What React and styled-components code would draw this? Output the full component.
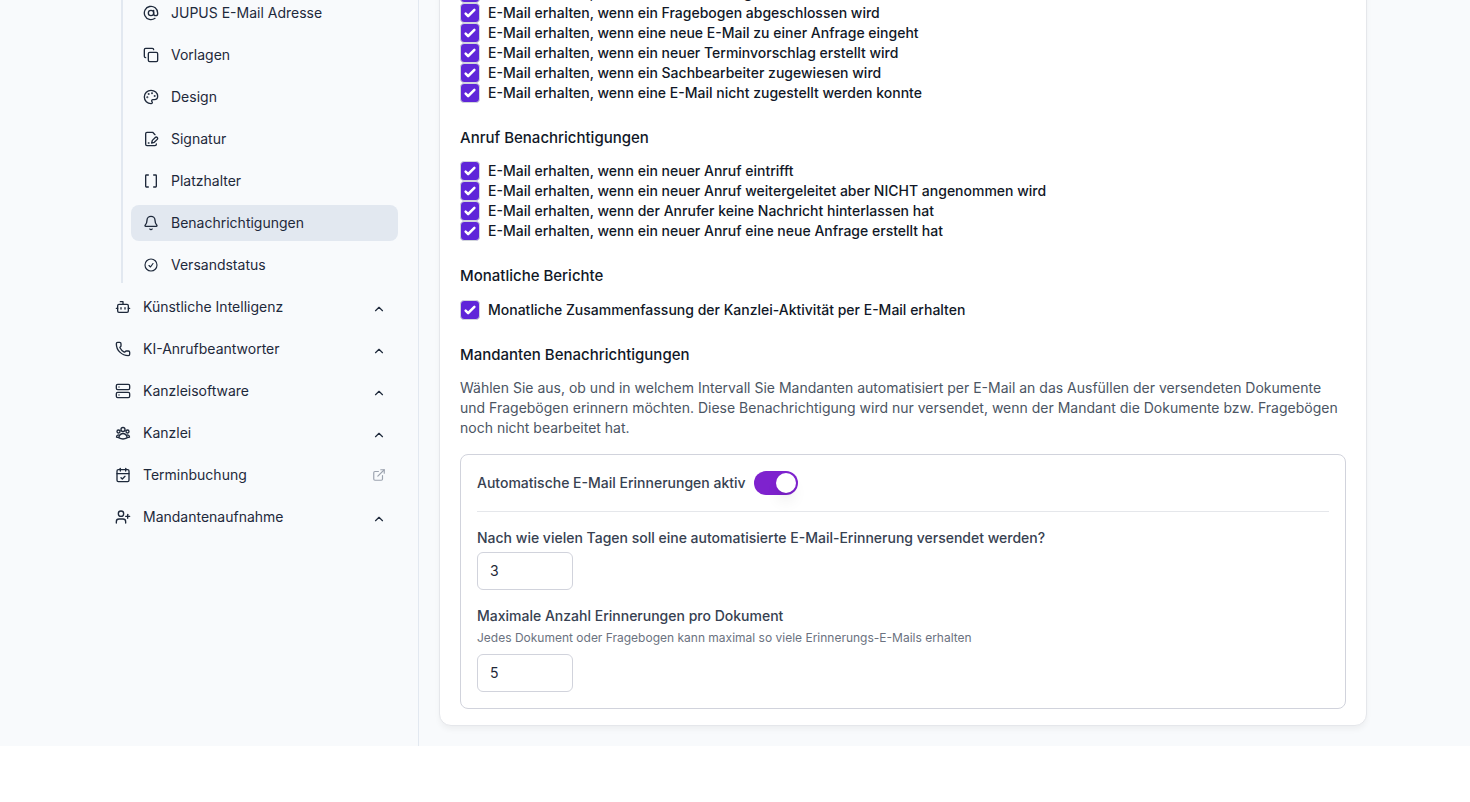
import React, { useState } from 'react';
import styled, { createGlobalStyle } from 'styled-components';
import {
  AtSign,
  Bell,
  Bot,
  Brackets,
  CalendarCheck,
  ChevronUp,
  Copy,
  ExternalLink,
  Palette,
  Phone,
  Server,
  UserPlus,
} from 'lucide-react';
import { HiOutlineCheckCircle, HiOutlineUserGroup } from 'react-icons/hi2';

const GlobalStyle = createGlobalStyle`
  *, *::before, *::after {
    box-sizing: border-box;
  }
  body {
    margin: 0;
    background-color: #ffffff;
    font-family: Inter, 'Liberation Sans', sans-serif;
    font-size: 14px;
    line-height: 20px;
    color: #111827;
  }
`;

const Page = styled.div`
  background-color: #f8fafc;
  overflow: hidden;
`;

const Container = styled.div`
  display: flex;
  max-width: 1280px;
  margin: 0 auto;
  padding: 0 8px;
`;

const Sidebar = styled.nav`
  flex: 0 0 316px;
  padding-right: 20px;
  border-right: 1px solid #e2e8f0;
`;

const NavList = styled.ul`
  display: flex;
  flex-direction: column;
  gap: 6px;
  margin: 0;
  padding: 0;
  list-style: none;
`;

const SubList = styled(NavList)`
  margin: -5px 0 6px 18px;
  padding-left: 8px;
  border-left: 2px solid #e2e8f0;
`;

const NavLink = styled.a`
  display: flex;
  align-items: center;
  gap: 12px;
  height: 36px;
  padding: 0 12px;
  border-radius: 8px;
  color: #1e293b;
  text-decoration: none;
  background-color: ${({ $active }) => ($active ? '#e2e8f0' : 'transparent')};
`;

const NavButton = styled.button`
  display: flex;
  align-items: center;
  gap: 12px;
  width: 100%;
  height: 36px;
  padding: 0 12px;
  border: 0;
  background: none;
  color: #1e293b;
  font: inherit;
  text-align: left;
`;

const NavText = styled.span`
  flex: 1;
`;

const Arrow = styled.span`
  display: flex;
  padding-top: 4px;
`;

const External = styled.span`
  display: flex;
  color: #9ca3af;
`;

const CheckIcon = styled(HiOutlineCheckCircle)`
  stroke-width: 1.75;
`;

const GroupIcon = styled(HiOutlineUserGroup)`
  stroke-width: 2;
`;

const Main = styled.main`
  flex: 1;
  min-width: 0;
  padding: 0 0 20px 20px;
`;

const Card = styled.div`
  margin-top: -20px;
  padding: 2px 20px 16px;
  border: 1px solid #e5e7eb;
  border-radius: 12px;
  background-color: #ffffff;
  box-shadow: 0 4px 6px -1px rgba(0, 0, 0, 0.05);
`;

const Section = styled.section`
  margin-bottom: 24px;
`;

const Title = styled.h3`
  margin: 0 0 ${({ $gap }) => $gap || 12}px;
  font-size: 15px;
  font-weight: 500;
  line-height: 22px;
`;

const CheckRow = styled.label`
  display: flex;
  align-items: center;
  gap: 8px;
  height: 20px;
  font-weight: 500;
`;

const Checkbox = styled.input`
  appearance: none;
  width: 20px;
  height: 20px;
  margin: 0;
  border: 1px solid #d1d5db;
  border-radius: 4px;
  background: #ffffff;

  &:checked {
    background: #5f26d9 url("data:image/svg+xml,%3Csvg viewBox='0 0 16 16' fill='white' xmlns='http://www.w3.org/2000/svg'%3E%3Cpath d='M12.207 4.793a1 1 0 010 1.414l-5 5a1 1 0 01-1.414 0l-2-2a1 1 0 011.414-1.414L6.5 9.086l4.293-4.293a1 1 0 011.414 0z'/%3E%3C/svg%3E") center / 20px 20px no-repeat;
  }
`;

const Intro = styled.p`
  margin: 0 0 16px;
  color: #4b5563;
`;

const Box = styled.div`
  padding: 16px;
  border: 1px solid #d1d3dc;
  border-radius: 8px;
`;

const SwitchRow = styled.label`
  display: flex;
  align-items: center;
  gap: 8px;
  padding-bottom: 16px;
  margin-bottom: 16px;
  border-bottom: 1px solid #e5e7eb;
  color: #374151;
  font-weight: 500;
`;

const Switch = styled.input`
  appearance: none;
  display: flex;
  align-items: center;
  width: 44px;
  height: 24px;
  margin: 0;
  padding: 0 2px;
  border-radius: 12px;
  background-color: #d1d5db;

  &::before {
    content: '';
    width: 20px;
    height: 20px;
    border-radius: 50%;
    background-color: #ffffff;
    box-shadow: 0 10px 15px -3px rgba(0, 0, 0, 0.1), 0 4px 6px -4px rgba(0, 0, 0, 0.1);
  }

  &:checked {
    justify-content: flex-end;
    background-color: #7e22ce;
  }
`;

const Field = styled.div`
  display: flex;
  flex-direction: column;
  align-items: flex-start;

  & + & {
    margin-top: 16px;
  }
`;

const FieldLabel = styled.label`
  margin-bottom: 4px;
  color: #374151;
  font-weight: 500;
`;

const Hint = styled.span`
  margin-bottom: 8px;
  color: #6b7280;
  font-size: 12px;
  line-height: 16px;
`;

const NumberInput = styled.input`
  width: 96px;
  height: 38px;
  padding: 0 12px 2px;
  border: 1px solid #d1d3dc;
  border-radius: 6px;
  background-color: #ffffff;
  color: #1f2937;
  font: inherit;
  appearance: textfield;
`;

const SignatureIcon = ({ size }) => (
  <svg
    width={size}
    height={size}
    viewBox="0 0 24 24"
    fill="none"
    stroke="currentColor"
    strokeWidth="2"
    strokeLinecap="round"
    strokeLinejoin="round"
  >
    <path d="M20 19.5v.5a2 2 0 0 1-2 2H6a2 2 0 0 1-2-2V4a2 2 0 0 1 2-2h8.5L18 5.5" />
    <path d="M8 18h1" />
    <path d="M18.42 9.61a2.1 2.1 0 1 1 2.97 2.97L16.95 17 13 18l.99-3.95 4.43-4.44Z" />
  </svg>
);

const subItems = [
  { label: 'JUPUS E-Mail Adresse', icon: AtSign },
  { label: 'Vorlagen', icon: Copy },
  { label: 'Design', icon: Palette },
  { label: 'Signatur', icon: SignatureIcon },
  { label: 'Platzhalter', icon: Brackets },
  { label: 'Benachrichtigungen', icon: Bell, active: true },
  { label: 'Versandstatus', icon: CheckIcon },
];

const groups = [
  { label: 'Künstliche Intelligenz', icon: Bot },
  { label: 'KI-Anrufbeantworter', icon: Phone },
  { label: 'Kanzleisoftware', icon: Server },
  { label: 'Kanzlei', icon: GroupIcon },
  { label: 'Terminbuchung', icon: CalendarCheck, external: true },
  { label: 'Mandantenaufnahme', icon: UserPlus },
];

const requestOptions = [
  'E-Mail erhalten, wenn eine neue Anfrage eintrifft',
  'E-Mail erhalten, wenn ein Fragebogen abgeschlossen wird',
  'E-Mail erhalten, wenn eine neue E-Mail zu einer Anfrage eingeht',
  'E-Mail erhalten, wenn ein neuer Terminvorschlag erstellt wird',
  'E-Mail erhalten, wenn ein Sachbearbeiter zugewiesen wird',
  'E-Mail erhalten, wenn eine E-Mail nicht zugestellt werden konnte',
];

const callOptions = [
  'E-Mail erhalten, wenn ein neuer Anruf eintrifft',
  'E-Mail erhalten, wenn ein neuer Anruf weitergeleitet aber NICHT angenommen wird',
  'E-Mail erhalten, wenn der Anrufer keine Nachricht hinterlassen hat',
  'E-Mail erhalten, wenn ein neuer Anruf eine neue Anfrage erstellt hat',
];

const reportOptions = ['Monatliche Zusammenfassung der Kanzlei-Aktivität per E-Mail erhalten'];

const Options = ({ items }) =>
  items.map(item => (
    <CheckRow key={item}>
      <Checkbox type="checkbox" defaultChecked />
      {item}
    </CheckRow>
  ));

const Navigation = () => (
  <Sidebar>
    <SubList>
      {subItems.map(({ label, icon: Icon, active }) => (
        <li key={label}>
          <NavLink href="#" $active={active}>
            <Icon size={16} />
            <NavText>{label}</NavText>
          </NavLink>
        </li>
      ))}
    </SubList>
    <NavList>
      {groups.map(({ label, icon: Icon, external }) => (
        <li key={label}>
          {external ? (
            <NavLink href="#">
              <Icon size={16} />
              <NavText>{label}</NavText>
              <External>
                <ExternalLink size={14} />
              </External>
            </NavLink>
          ) : (
            <NavButton type="button">
              <Icon size={16} />
              <NavText>{label}</NavText>
              <Arrow>
                <ChevronUp size={14} />
              </Arrow>
            </NavButton>
          )}
        </li>
      ))}
    </NavList>
  </Sidebar>
);

export default function App() {
  const [days, setDays] = useState('3');
  const [max, setMax] = useState('5');

  return (
    <Page>
      <GlobalStyle />
      <Container>
        <Navigation />
        <Main>
          <Card>
            <Section>
              <Options items={requestOptions} />
            </Section>
            <Section>
              <Title>Anruf Benachrichtigungen</Title>
              <Options items={callOptions} />
            </Section>
            <Section>
              <Title $gap={13}>Monatliche Berichte</Title>
              <Options items={reportOptions} />
            </Section>
            <Title>Mandanten Benachrichtigungen</Title>
            <Intro>
              Wählen Sie aus, ob und in welchem Intervall Sie Mandanten automatisiert per E-Mail an das Ausfüllen der
              versendeten Dokumente und Fragebögen erinnern möchten. Diese Benachrichtigung wird nur versendet, wenn der
              Mandant die Dokumente bzw. Fragebögen noch nicht bearbeitet hat.
            </Intro>
            <Box>
              <SwitchRow>
                Automatische E-Mail Erinnerungen aktiv
                <Switch type="checkbox" role="switch" defaultChecked />
              </SwitchRow>
              <Field>
                <FieldLabel htmlFor="days">
                  Nach wie vielen Tagen soll eine automatisierte E-Mail-Erinnerung versendet werden?
                </FieldLabel>
                <NumberInput id="days" type="number" value={days} onChange={e => setDays(e.target.value)} />
              </Field>
              <Field>
                <FieldLabel htmlFor="max">Maximale Anzahl Erinnerungen pro Dokument</FieldLabel>
                <Hint>Jedes Dokument oder Fragebogen kann maximal so viele Erinnerungs-E-Mails erhalten</Hint>
                <NumberInput id="max" type="number" value={max} onChange={e => setMax(e.target.value)} />
              </Field>
            </Box>
          </Card>
        </Main>
      </Container>
    </Page>
  );
}
